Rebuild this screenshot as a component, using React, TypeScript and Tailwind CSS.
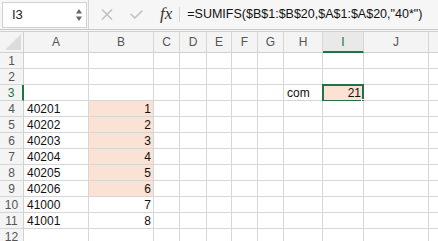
import React from "react";

const cols = [
  { k: "A", w: 65 },
  { k: "B", w: 65 },
  { k: "C", w: 26 },
  { k: "D", w: 27 },
  { k: "E", w: 25 },
  { k: "F", w: 26 },
  { k: "G", w: 26 },
  { k: "H", w: 39 },
  { k: "I", w: 41 },
  { k: "J", w: 65 },
  { k: "", w: 40 },
];

const data: Record<number, Record<string, string>> = {
  3: { H: "com", I: "21" },
  4: { A: "40201", B: "1" },
  5: { A: "40202", B: "2" },
  6: { A: "40203", B: "3" },
  7: { A: "40204", B: "4" },
  8: { A: "40205", B: "5" },
  9: { A: "40206", B: "6" },
  10: { A: "41000", B: "7" },
  11: { A: "41001", B: "8" },
  12: {},
  1: {},
  2: {},
};

const numeric = new Set(["B", "I"]);

export default function App() {
  const rows = [1, 2, 3, 4, 5, 6, 7, 8, 9, 10, 11, 12];
  return (
    <div
      className="w-[438px] h-[241px] overflow-hidden bg-white relative"
      style={{ fontFamily: '"Liberation Sans", Arial, sans-serif' }}
    >
      {/* toolbar */}
      <div className="h-[29px] bg-[#f6f6f6] flex items-center">
        <div className="ml-[2px] w-[85px] h-[26px] bg-white border border-[#d2d2d2] flex items-center justify-between pl-[9px] pr-[3px]">
          <span className="text-[13px] text-[#222]">I3</span>
          <svg width="8" height="16" viewBox="0 0 8 16">
            <path d="M4 2 L7 6.5 L1 6.5 Z" fill="#666" />
            <path d="M4 14 L7 9.5 L1 9.5 Z" fill="#666" />
          </svg>
        </div>
        <div className="ml-[1px] w-px h-[29px] bg-[#d6d6d6]" />
        <div className="ml-[12px] w-[12px] h-[12px] flex items-center justify-center">
          <svg width="12" height="11" viewBox="0 0 12 11">
            <path d="M1 0.5 L11 10.5 M11 0.5 L1 10.5" stroke="#c2c2c2" strokeWidth="1.6" />
          </svg>
        </div>
        <div className="ml-[17px] w-[13px] h-[10px] flex items-center">
          <svg width="13" height="9" viewBox="0 0 13 9">
            <path d="M0.8 4.2 L4.8 8 L12.3 0.6" stroke="#c2c2c2" strokeWidth="1.6" fill="none" />
          </svg>
        </div>
        <span
          className="ml-[17px] text-[17px] italic text-[#333] leading-none -mt-[3px]"
          style={{ fontFamily: '"Liberation Serif", "Times New Roman", serif' }}
        >
          fx
        </span>
        <div className="ml-[7px] w-px h-[15px] bg-[#d6d6d6]" />
        <span className="ml-[7px] text-[12.5px] text-[#111] whitespace-nowrap">
          =SUMIFS($B$1:$B$20,$A$1:$A$20,"40*")
        </span>
      </div>
      <div className="h-px bg-[#c8c8c8]" />
      <div className="h-px bg-[#f6f6f6]" />

      {/* header row */}
      <div className="flex h-[22px] bg-[#f4f4f4] border-t border-[#d0d0d0]">
        <div className="w-[24px] shrink-0 border-r border-b border-[#d0d0d0] relative">
          <svg className="absolute right-[2px] bottom-[2px]" width="16" height="16" viewBox="0 0 16 16">
            <path d="M16 0 L16 16 L0 16 Z" fill="#dcdcdc" />
          </svg>
        </div>
        {cols.map((c, i) => (
          <div
            key={i}
            style={{ width: c.w }}
            className={`shrink-0 border-r border-[#d6d6d6] flex items-center justify-center text-[12px] relative ${
              c.k === "I"
                ? "text-[#217346] bg-[#e9e9e9] border-b-2 border-b-[#217346]"
                : "text-[#555] border-b border-b-[#d0d0d0]"
            }`}
          >
            {c.k}
          </div>
        ))}
      </div>

      {/* rows */}
      {rows.map((r) => (
        <div key={r} className="flex h-[16px]">
          <div
            className={`w-[24px] shrink-0 bg-[#f4f4f4] border-b border-[#d6d6d6] flex items-center justify-center text-[12px] ${
              r === 3
                ? "text-[#217346] border-r-2 border-r-[#217346] bg-[#e9e9e9]"
                : "text-[#555] border-r border-r-[#d0d0d0]"
            }`}
          >
            {r}
          </div>
          {cols.map((c, i) => {
            const v = data[r]?.[c.k] ?? "";
            const peach = (c.k === "B" && r >= 4 && r <= 9) || (c.k === "I" && r === 3);
            const sel = c.k === "I" && r === 3;
            return (
              <div
                key={i}
                style={{ width: c.w }}
                className={`shrink-0 border-r border-b border-[#d6d6d6] flex items-center text-[12px] text-[#111] relative ${
                  numeric.has(c.k) ? "justify-end pr-[2px]" : "justify-start pl-[3px]"
                } ${peach ? "bg-[#fbe2d5]" : "bg-white"}`}
              >
                {sel && (
                  <>
                    <div className="absolute -left-[1px] -top-[1px] w-[42px] h-[18px] border-2 border-[#217346]" />
                    <div className="absolute -right-[3px] -bottom-[4px] w-[5px] h-[5px] bg-[#217346] border border-white" />
                  </>
                )}
                <span className="relative">{v}</span>
              </div>
            );
          })}
        </div>
      ))}
    </div>
  );
}
